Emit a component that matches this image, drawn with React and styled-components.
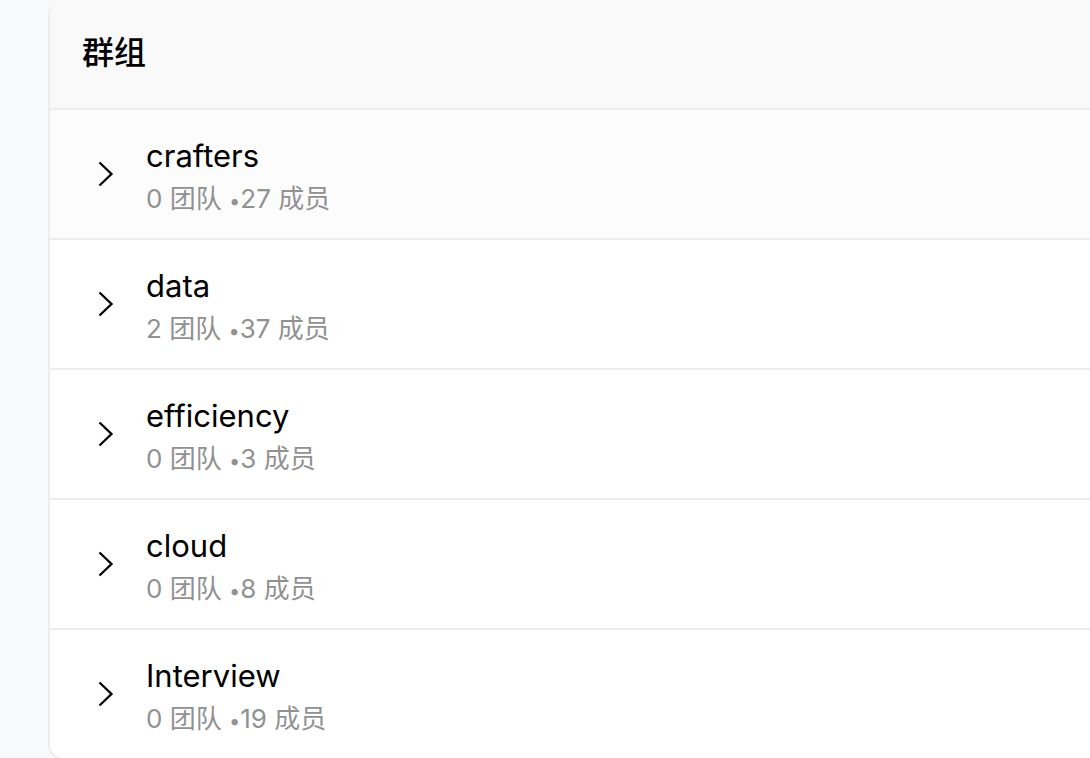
import React from 'react';
import styled, { createGlobalStyle } from 'styled-components';

const GlobalStyle = createGlobalStyle`
  * { box-sizing: border-box; }
  body {
    margin: 0;
    background: #f8f9fb;
    color: #000;
    font-family: Inter, "Noto Sans CJK SC", sans-serif;
    overflow-x: hidden;
  }
`;

const Page = styled.main`
  padding-left: 48px;
`;

const Panel = styled.section`
  border: 2px solid #ededed;
  border-width: 0 0 2px 2px;
  border-radius: 16px 0 0 16px;
  background: #fff;
  overflow: hidden;
`;

const PanelHeader = styled.header`
  display: flex;
  align-items: center;
  height: 110px;
  padding: 0 32px 2px;
  background: #f9f9f9;
  border-bottom: 2px solid #ededed;
`;

const Title = styled.h1`
  margin: 0;
  font-size: 32px;
  line-height: 44px;
  font-weight: 500;
`;

const GroupList = styled.ul`
  margin: 0;
  padding: 0;
  list-style: none;
`;

const GroupRow = styled.li`
  display: flex;
  align-items: center;
  gap: 24px;
  height: 130px;
  padding: 0 40px;
  background: ${({ $hovered }) => ($hovered ? '#fcfcfc' : '#fff')};
  border-bottom: 2px solid #ededed;
  &:last-child {
    height: 128px;
    border-bottom: 0;
  }
`;

const ExpandButton = styled.button`
  display: flex;
  width: 32px;
  height: 32px;
  padding: 0;
  border: 0;
  background: none;
  color: #000;
  cursor: pointer;
`;

const GroupText = styled.div`
  padding-top: 8px;
`;

const GroupName = styled.div`
  font-size: 31px;
  line-height: 44px;
`;

const GroupMeta = styled.div`
  font-size: 26px;
  line-height: 42px;
  color: #919191;
`;

const Bullet = styled.span`
  font-size: 20px;
`;

const groups = [
  { name: 'crafters', teams: 0, members: 27, hovered: true },
  { name: 'data', teams: 2, members: 37 },
  { name: 'efficiency', teams: 0, members: 3 },
  { name: 'cloud', teams: 0, members: 8 },
  { name: 'Interview', teams: 0, members: 19 },
];

function Chevron() {
  return (
    <svg width="32" height="32" viewBox="0 0 32 32" fill="none" aria-hidden="true">
      <path d="M9.5 4.5L21.5 16L9.5 27.5" stroke="currentColor" strokeWidth="2.3" />
    </svg>
  );
}

export default function App() {
  return (
    <>
      <GlobalStyle />
      <Page>
        <Panel>
          <PanelHeader>
            <Title>群组</Title>
          </PanelHeader>
          <GroupList>
            {groups.map((g) => (
              <GroupRow key={g.name} $hovered={g.hovered}>
                <ExpandButton type="button" aria-label={g.name}>
                  <Chevron />
                </ExpandButton>
                <GroupText>
                  <GroupName>{g.name}</GroupName>
                  <GroupMeta>
                    {g.teams} 团队 <Bullet>•</Bullet>{g.members} 成员
                  </GroupMeta>
                </GroupText>
              </GroupRow>
            ))}
          </GroupList>
        </Panel>
      </Page>
    </>
  );
}
